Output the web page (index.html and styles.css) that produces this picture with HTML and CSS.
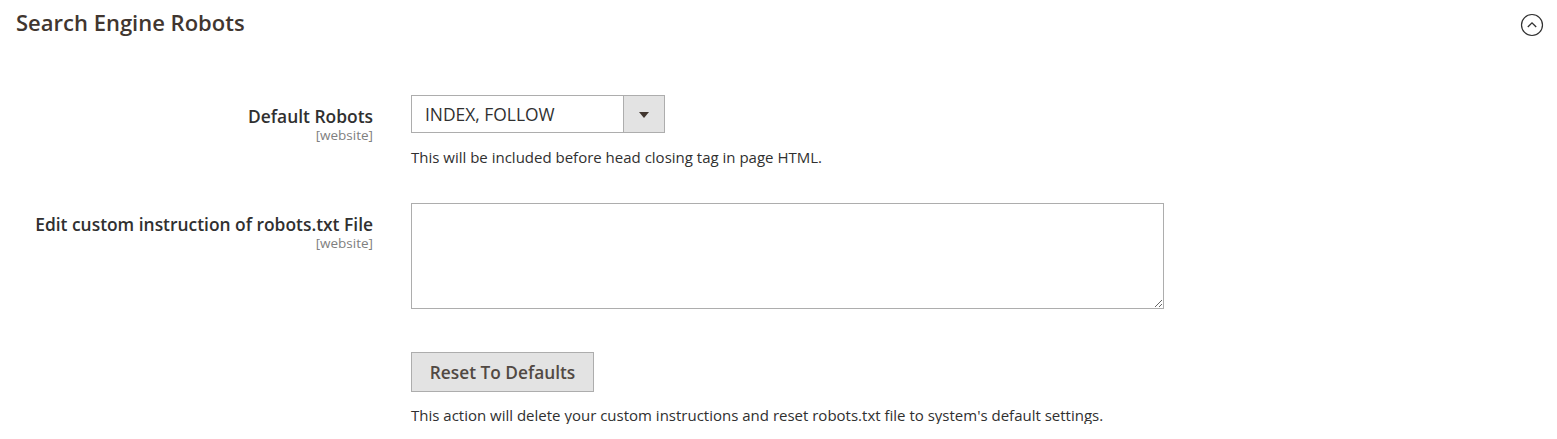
FILE: index.html
```html
<!DOCTYPE html>
<html>
<head>
<meta charset="utf-8">
<link rel="stylesheet" href="styles.css">
</head>
<body>
<section class="section">
  <div class="section-head">
    <h2 class="title">Search Engine Robots</h2>
    <span class="toggle">
      <svg width="24" height="24" viewBox="0 0 24 24"><circle cx="12" cy="12" r="10.5" fill="none" stroke="#303030" stroke-width="1.2"/><path d="M7.8 14 L12 9.8 L16.2 14" fill="none" stroke="#303030" stroke-width="1.3"/></svg>
    </span>
  </div>
  <div class="rows">
    <div class="row">
      <div class="label"><span class="label-text">Default Robots</span><span class="scope">[website]</span></div>
      <div class="value">
        <div class="select"><span class="select-text">INDEX, FOLLOW</span><span class="select-arrow"><span class="tri"></span></span></div>
        <p class="note">This will be included before head closing tag in page HTML.</p>
      </div>
    </div>
    <div class="row row-2">
      <div class="label"><span class="label-text">Edit custom instruction of robots.txt File</span><span class="scope">[website]</span></div>
      <div class="value">
        <textarea class="textarea"></textarea>
      </div>
    </div>
    <div class="row row-3">
      <div class="label"></div>
      <div class="value">
        <button class="btn">Reset To Defaults</button>
        <p class="note">This action will delete your custom instructions and reset robots.txt file to system's default settings.</p>
      </div>
    </div>
  </div>
</section>
</body>
</html>
```
FILE: styles.css
```css
* { box-sizing: border-box; }
body { margin: 0; background: #fff; font-family: "Open Sans", sans-serif; color: #303030; }
.section { padding: 0 0 0 16px; }
.section-head { display: flex; justify-content: space-between; align-items: center; height: 43px; padding-right: 13px; }
.title { margin: 0; font-size: 22px; font-weight: 600; color: #41362f; letter-spacing: 0; }
.toggle { display: flex; margin-top: 6px; }
.rows { padding-top: 52px; }
.row { display: flex; }
.label { width: 357px; display: flex; flex-direction: column; align-items: flex-end; text-align: right; }
.label-text { font-size: 17.4px; font-weight: 600; color: #303030; line-height: 20px; margin-top: 11px; }
.scope { font-size: 13.5px; color: #808080; line-height: 18px; }
.value { margin-left: 38px; }
.select { width: 254px; height: 38px; border: 1px solid #adadad; display: flex; align-items: stretch; }
.select-text { flex: 1; font-size: 17.4px; color: #303030; padding-left: 13px; line-height: 37px; }
.select-arrow { width: 41px; background: #e3e3e3; border-left: 1px solid #adadad; display: flex; align-items: center; justify-content: center; }
.tri { width: 0; height: 0; border-left: 5px solid transparent; border-right: 5px solid transparent; border-top: 6px solid #41362f; margin-top: 1px; }
.note { margin: 15px 0 0; font-size: 15px; color: #303030; line-height: 18px; }
.row-2 { margin-top: 37px; }
.textarea { display: block; width: 753px; height: 106px; border: 1px solid #adadad; resize: vertical; margin: 0; }
.row-3 { margin-top: 43px; }
.btn { display: block; width: 183px; height: 40px; background: #e3e3e3; border: 1px solid #adadad; color: #514943; font-family: "Open Sans", sans-serif; font-size: 17.3px; font-weight: 600; padding: 0; margin: 0; }
.row-3 .note { margin-top: 14px; }
```
